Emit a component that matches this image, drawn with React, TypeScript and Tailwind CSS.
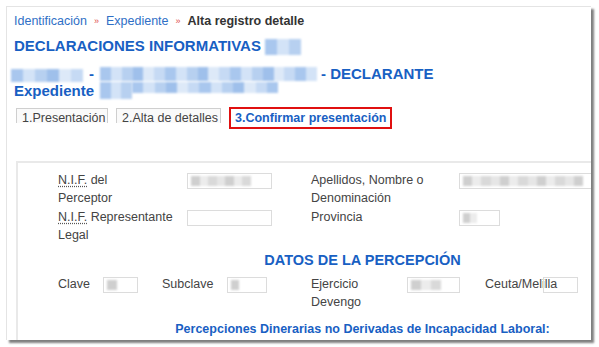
import React from 'react';

const shades = ['bg-[#b7d0f0]', 'bg-[#d3e3f7]', 'bg-[#a9c7ee]', 'bg-[#c6daf4]', 'bg-[#dde9f8]', 'bg-[#9fc0eb]'];
const grays = ['bg-[#d9d9d9]', 'bg-[#e6e6e6]', 'bg-[#cfcfcf]', 'bg-[#ececec]'];

function Blur({ w, h, seg = 14, gray = false }: { w: number; h: number; seg?: number; gray?: boolean }) {
  const n = Math.max(1, Math.round(w / seg));
  const pal = gray ? grays : shades;
  return (
    <span className="inline-flex align-middle blur-[0.8px]" style={{ width: w, height: h }}>
      {Array.from({ length: n }).map((_, i) => (
        <span key={i} className={`flex-1 ${pal[(i * 5 + 2) % pal.length]}`} />
      ))}
    </span>
  );
}

function Field({ w, fill, children }: { w: number; fill?: number; children?: React.ReactNode }) {
  return (
    <div
      className="h-[16px] border border-[#dcdcdc] bg-transparent flex items-center pl-[3px] shrink-0"
      style={{ width: w }}
    >
      {fill ? <Blur w={fill} h={10} seg={9} gray /> : null}
      {children}
    </div>
  );
}

function Sep() {
  return <span className="text-[#e04a4a] text-[9px] mx-[7px] relative -top-[1px]">»</span>;
}

const Nif = () => <span className="underline decoration-dotted decoration-[#555] underline-offset-2">N.I.F.</span>;

export default function App() {
  return (
    <div className="w-[599px] h-[347px] bg-white overflow-hidden font-['Liberation_Sans',Arial,sans-serif]">
      <div className="ml-[6px] mt-[6px] w-[585px] h-[334px] border-t border-l border-[#e4e4e4] shadow-[3px_3px_2px_rgba(0,0,0,0.5)] overflow-hidden pl-[7px] pt-[5px]">
        {/* breadcrumb */}
        <div className="h-[18px] leading-[18px] text-[12.5px] whitespace-nowrap">
          <span className="text-[#2f6fc6]">Identificación</span>
          <Sep />
          <span className="text-[#2f6fc6]">Expediente</span>
          <Sep />
          <span className="font-bold text-[#333]">Alta registro detalle</span>
        </div>

        <div className="mt-[6px] h-[20px] leading-[20px] text-[15px] font-bold text-[#1860c3] whitespace-nowrap flex items-center">
          DECLARACIONES INFORMATIVAS
          <span className="ml-[4px]"><Blur w={36} h={16} seg={12} /></span>
        </div>

        <div className="mt-[9px] h-[17px] leading-[17px] text-[15px] font-bold text-[#1860c3] whitespace-nowrap flex items-center">
          <span className="-ml-[3px]"><Blur w={72} h={13} seg={12} /></span>
          <span className="mx-[6px]">-</span>
          <Blur w={217} h={14} seg={11} />
          <span className="ml-[4px]">- DECLARANTE</span>
        </div>

        <div className="h-[17px] leading-[17px] text-[15px] font-bold text-[#1860c3] whitespace-nowrap flex items-center">
          Expediente
          <span className="ml-[6px] flex items-start">
            <Blur w={32} h={17} seg={11} />
            <Blur w={146} h={11} seg={11} />
          </span>
        </div>

        {/* tabs */}
        <div className="mt-[9px] flex items-start text-[12.5px] whitespace-nowrap">
          <div className="ml-[2px] h-[15px] leading-[19px] border border-b-0 border-[#cfcfcf] bg-[#fafafa] px-[5px] text-[#444] w-[92px]">
            1.Presentación
          </div>
          <div className="ml-[8px] h-[15px] leading-[19px] border border-b-0 border-[#cfcfcf] bg-[#fafafa] px-[5px] text-[#444] w-[105px]">
            2.Alta de detalles
          </div>
          <div className="ml-[8px] -mt-[1px] h-[22px] leading-[18px] border-2 border-[#e01010] px-[4px] font-bold text-[#1860c3] w-[163px]">
            3.Confirmar presentación
          </div>
        </div>

        {/* panel */}
        <div className="mt-[32px] ml-[2px] w-[720px] h-[200px] border-t-2 border-l-2 border-[#e9e9e9] pt-[8px] text-[12.5px] text-[#444] leading-[18px]">
          <div className="grid grid-cols-[40px_129px_124px_148px_1fr]">
            <div />
            <div>
              <Nif /> del
              <br />
              Perceptor
            </div>
            <div className="pt-[2px]"><Field w={85} fill={60} /></div>
            <div>
              Apellidos, Nombre o
              <br />
              Denominación
            </div>
            <div className="pt-[2px]"><Field w={140} fill={120} /></div>

            <div />
            <div className="mt-[1px]">
              <Nif /> Representante
              <br />
              Legal
            </div>
            <div className="mt-[1px] pt-[2px]"><Field w={85} /></div>
            <div className="mt-[1px]">Provincia</div>
            <div className="mt-[1px] pt-[2px]"><Field w={41} fill={14} /></div>
          </div>

          <div className="w-[689px] mt-[6px] text-center text-[14.5px] leading-[20px] font-bold text-[#1860c3]">
            DATOS DE LA PERCEPCIÓN
          </div>

          <div className="mt-[5px] flex items-start whitespace-nowrap">
            <div className="w-[40px]" />
            <div className="w-[45px]">Clave</div>
            <div className="w-[59px] pt-[2px]"><Field w={35} fill={10} /></div>
            <div className="w-[65px]">Subclave</div>
            <div className="w-[84px] pt-[2px]"><Field w={40} fill={8} /></div>
            <div className="w-[96px]">
              Ejercicio
              <br />
              Devengo
            </div>
            <div className="w-[78px] pt-[2px]"><Field w={53} fill={30} /></div>
            <div className="w-[58px]">Ceuta/Melilla</div>
            <div className="pt-[2px]"><Field w={35} /></div>
          </div>

          <div className="w-[689px] mt-[9px] text-center text-[12.5px] leading-[18px] font-bold text-[#1860c3]">
            Percepciones Dinerarias no Derivadas de Incapacidad Laboral:
          </div>
        </div>
      </div>
    </div>
  );
}
